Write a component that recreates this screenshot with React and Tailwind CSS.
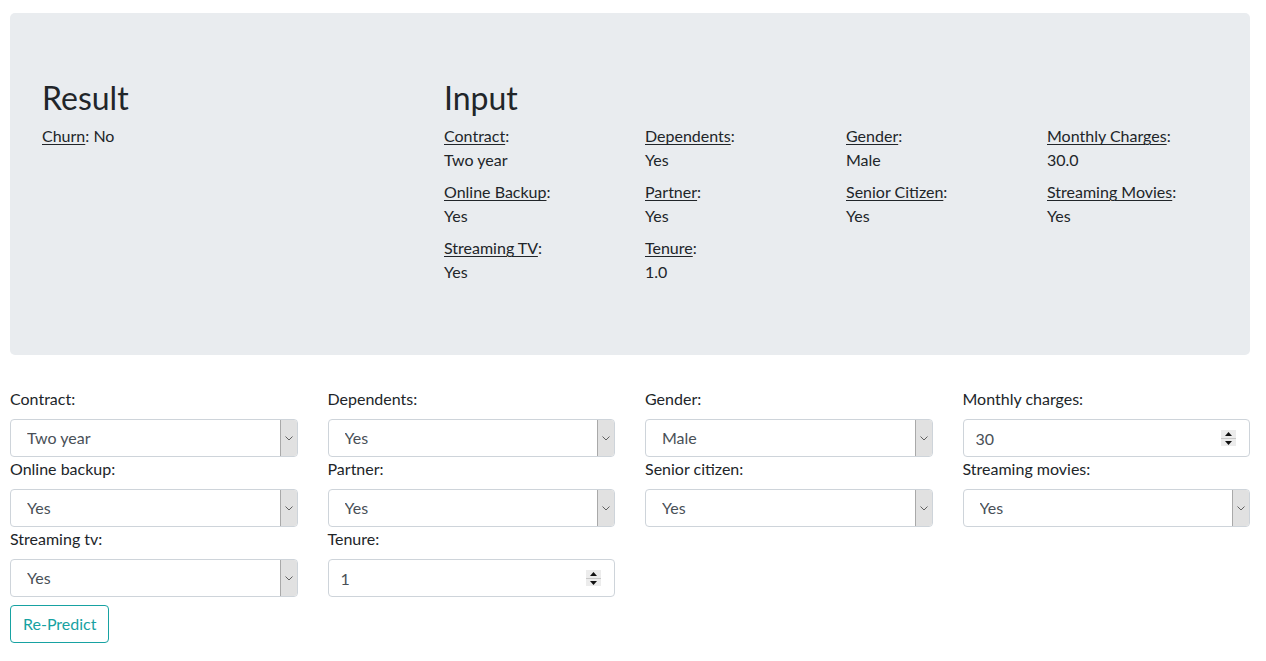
import React from "react";

const font = { fontFamily: '"Lato", "Liberation Sans", sans-serif' };

const inputs = [
  ["Contract", "Two year"],
  ["Dependents", "Yes"],
  ["Gender", "Male"],
  ["Monthly Charges", "30.0"],
  ["Online Backup", "Yes"],
  ["Partner", "Yes"],
  ["Senior Citizen", "Yes"],
  ["Streaming Movies", "Yes"],
  ["Streaming TV", "Yes"],
  ["Tenure", "1.0"],
];

const fields = [
  { label: "Contract:", value: "Two year", kind: "select" },
  { label: "Dependents:", value: "Yes", kind: "select" },
  { label: "Gender:", value: "Male", kind: "select" },
  { label: "Monthly charges:", value: "30", kind: "number" },
  { label: "Online backup:", value: "Yes", kind: "select" },
  { label: "Partner:", value: "Yes", kind: "select" },
  { label: "Senior citizen:", value: "Yes", kind: "select" },
  { label: "Streaming movies:", value: "Yes", kind: "select" },
  { label: "Streaming tv:", value: "Yes", kind: "select" },
  { label: "Tenure:", value: "1", kind: "number" },
];

function SelectBox({ value }) {
  return (
    <div className="relative h-[38px] w-full rounded-[4px] border border-[#ced4da] bg-white">
      <select
        defaultValue={value}
        className="h-full w-full appearance-none bg-transparent pl-[16px] pr-6 text-[16px] text-[#495057] outline-none"
        style={font}
      >
        <option>{value}</option>
      </select>
      <div className="pointer-events-none absolute right-0 top-0 flex h-full w-[17px] items-center justify-center rounded-r-[3px] border-l border-[#a9a9a9] bg-[#e1e1e1]">
        <svg width="8" height="5" viewBox="0 0 8 5">
          <path d="M0.5 0.5 L4 4 L7.5 0.5" fill="none" stroke="#606060" strokeWidth="1" />
        </svg>
      </div>
    </div>
  );
}

function NumberBox({ value }) {
  return (
    <div className="relative h-[38px] w-full rounded-[4px] border border-[#ced4da] bg-white">
      <input
        type="text"
        defaultValue={value}
        className="h-full w-full bg-transparent pl-[12px] pr-8 text-[16px] text-[#495057] outline-none"
        style={font}
      />
      <div className="pointer-events-none absolute right-[13px] top-[10px] flex h-[16px] w-[15px] flex-col bg-[#ececec]">
        <div className="flex flex-1 items-center justify-center border-b border-[#c8c8c8]">
          <svg width="7" height="4" viewBox="0 0 7 4">
            <path d="M3.5 0 L7 4 L0 4 Z" fill="#111" />
          </svg>
        </div>
        <div className="flex flex-1 items-center justify-center">
          <svg width="7" height="4" viewBox="0 0 7 4">
            <path d="M0 0 L7 0 L3.5 4 Z" fill="#111" />
          </svg>
        </div>
      </div>
    </div>
  );
}

export default function App() {
  return (
    <div className="min-h-screen bg-white text-[16px] leading-[24px] text-[#212529]" style={font}>
      <div className="w-[1240px] pl-[10px] pt-[13px]" style={{ boxSizing: "content-box" }}>
        {/* jumbotron */}
        <div className="mb-[32px] rounded-[5px] bg-[#e9ecef] px-[32px] pt-[66px] pb-[63px]">
          <div className="flex">
            <div className="w-[402px] pr-[30px]">
              <h2 className="mb-[7px] text-[32px] leading-[38.4px] font-normal">Result</h2>
              <p className="mb-[16px]">
                <span className="underline underline-offset-2">Churn</span>: No
              </p>
            </div>
            <div className="w-[774px]">
              <h2 className="mb-[7px] text-[32px] leading-[38.4px] font-normal">Input</h2>
              <div className="grid grid-cols-4 gap-x-[30px]">
                {inputs.map(([k, v]) => (
                  <div key={k} className="mb-[8px]">
                    <div>
                      <span className="underline underline-offset-2">{k}</span>:
                    </div>
                    <div>{v}</div>
                  </div>
                ))}
              </div>
            </div>
          </div>
        </div>

        {/* form */}
        <form onSubmit={(e) => e.preventDefault()}>
          <div className="grid grid-cols-4 gap-x-[30px]">
            {fields.map((f) => (
              <div key={f.label}>
                <label className="mb-[8px] block">{f.label}</label>
                {f.kind === "select" ? <SelectBox value={f.value} /> : <NumberBox value={f.value} />}
              </div>
            ))}
          </div>
          <button
            type="submit"
            className="mt-[8px] h-[38px] rounded-[4px] border border-[#17a2a2] bg-white px-[12px] text-[16px] text-[#17a2a2]"
            style={font}
          >
            Re-Predict
          </button>
        </form>
      </div>
    </div>
  );
}
